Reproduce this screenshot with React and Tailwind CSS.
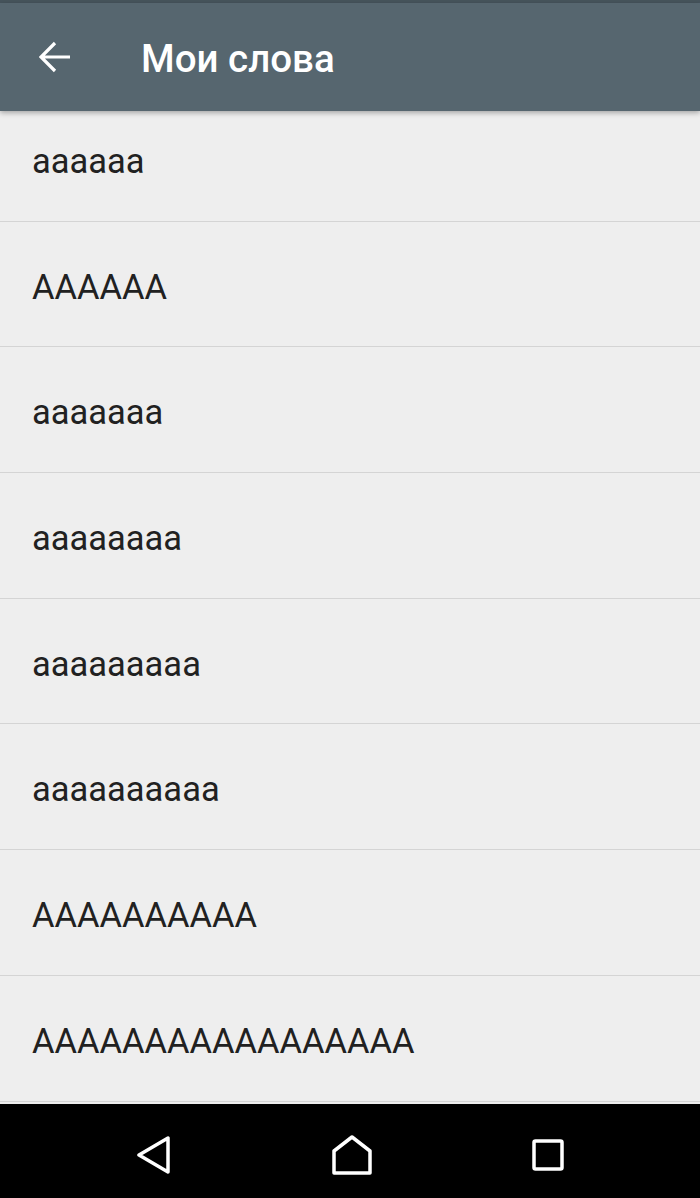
import React from "react";

const words = [
  "aaaaaa",
  "AAAAAA",
  "aaaaaaa",
  "aaaaaaaa",
  "aaaaaaaaa",
  "aaaaaaaaaa",
  "AAAAAAAAAA",
  "AAAAAAAAAAAAAAAAA",
];

const BackArrow = () => (
  <svg width="32" height="32" viewBox="0 0 32 32" fill="none">
    <path
      d="M31 16H3M16 2L2 16l14 14"
      stroke="white"
      strokeWidth="3.2"
      strokeLinecap="butt"
    />
  </svg>
);

const NavBack = () => (
  <svg width="36" height="38" viewBox="0 0 36 38" fill="none">
    <path
      d="M32 2v34L3 19z"
      stroke="white"
      strokeWidth="3.5"
      strokeLinejoin="round"
    />
  </svg>
);

const NavHome = () => (
  <svg width="40" height="40" viewBox="0 0 40 40" fill="none">
    <path
      d="M2 38V16L20 2l18 14v22z"
      stroke="white"
      strokeWidth="3.5"
      strokeLinejoin="round"
    />
  </svg>
);

const NavRecent = () => (
  <svg width="32" height="32" viewBox="0 0 32 32" fill="none">
    <rect
      x="2"
      y="2"
      width="28"
      height="28"
      rx="1.5"
      stroke="white"
      strokeWidth="3.5"
    />
  </svg>
);

const App = () => {
  return (
    <div
      className="w-[700px] h-[1198px] flex flex-col bg-[#eeeeee] overflow-hidden"
      style={{ fontFamily: "Roboto, 'Liberation Sans', sans-serif" }}
    >
      <div className="h-[3px] bg-[#46545c]" />

      {/* toolbar */}
      <div className="relative z-10 h-[108px] flex items-center bg-[#56666f] shadow-[0_2px_5px_rgba(0,0,0,0.3)]">
        <div className="w-[141px] pl-[39px] flex items-center">
          <BackArrow />
        </div>
        <h1 className="text-white text-[38.5px] font-medium leading-none pt-[4px]">
          Мои слова
        </h1>
      </div>

      {/* list */}
      <div className="h-[993px] overflow-hidden">
        <div className="-mt-[15px]">
          {words.map((w, i) => (
            <div
              key={i}
              className="h-[125.7px] flex items-center pl-[32px] pt-[7px] border-b border-[#d4d4d4] text-[#212121] text-[34.5px]"
            >
              {w}
            </div>
          ))}
        </div>
      </div>

      {/* android nav bar */}
      <div className="flex-1 bg-black flex items-center justify-center gap-[160px] pt-[8px]">
        <NavBack />
        <NavHome />
        <NavRecent />
      </div>
    </div>
  );
};

export default App;
